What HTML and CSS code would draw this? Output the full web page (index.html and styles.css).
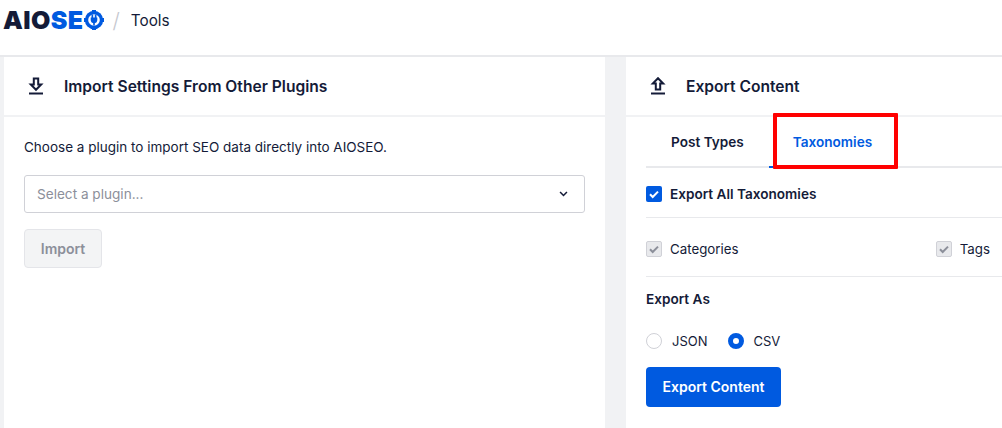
FILE: index.html
```html
<!DOCTYPE html>
<html lang="en">
<head>
  <meta charset="UTF-8">
  <title>Tools</title>
  <link rel="stylesheet" href="styles.css">
</head>
<body>
  <header class="topbar">
    <div class="logo">
      <span class="logo-dark">AIO</span><span class="logo-blue">SE</span>
      <svg class="logo-gear" viewBox="0 0 20 20" width="20" height="20">
        <circle cx="10" cy="10" r="9.200" fill="#005ae0"/>
        <path d="M8 0h4v3H8zM8 17h4v3H8zM0 8h3v4H0zM17 8h3v4h-3z" fill="#005ae0"/>
        <circle cx="10" cy="10" r="5.800" fill="#fff"/>
        <path d="M7.500 4.500h1.700v3h1.600v-3h1.700v3h.8v2.800a3.200 3.200 0 0 1-2.500 3V15.500H9.200v-2.200a3.200 3.200 0 0 1-2.500-3V7.500h.8z" fill="#005ae0"/>
      </svg>
    </div>
    <span class="crumb-sep">/</span>
    <span class="crumb">Tools</span>
  </header>

  <main class="columns">
    <section class="card card-import">
      <div class="card-head">
        <svg class="head-icon" viewBox="0 0 16 18" width="16" height="18">
          <path d="M5.800 1.500h4.400v6h3L8 12.800 2.800 7.500h3z" fill="none" stroke="#141b38" stroke-width="2"/>
          <path d="M1 16.500h14" stroke="#141b38" stroke-width="2"/>
        </svg>
        <h2>Import Settings From Other Plugins</h2>
      </div>
      <div class="import-body">
        <p class="intro">Choose a plugin to import SEO data directly into AIOSEO.</p>
        <div class="select">
          <span>Select a plugin...</span>
          <svg viewBox="0 0 10 7" width="9" height="6">
            <path d="M1 1.200l4 4 4-4" fill="none" stroke="#141b38" stroke-width="1.800"/>
          </svg>
        </div>
        <button class="btn-disabled" type="button">Import</button>
      </div>
    </section>

    <section class="card card-export">
      <div class="card-head">
        <svg class="head-icon" viewBox="0 0 16 18" width="16" height="18">
          <path d="M5.800 12.500h4.400v-6h3L8 1.200 2.800 6.500h3z" fill="none" stroke="#141b38" stroke-width="2"/>
          <path d="M1 16.500h14" stroke="#141b38" stroke-width="2"/>
        </svg>
        <h2>Export Content</h2>
      </div>
      <div class="tabs">
        <span class="tab">Post Types</span>
        <span class="tab tab-active">Taxonomies</span>
        <span class="tab-mark"></span>
      </div>
      <div class="export-body">
        <label class="row row-all">
          <span class="check check-on">
            <svg viewBox="0 0 16 16" width="16" height="16"><path d="M4 8.300l2.700 2.700L12 5.600" fill="none" stroke="#fff" stroke-width="2"/></svg>
          </span>
          Export All Taxonomies
        </label>
        <div class="row row-types">
          <label class="type">
            <span class="check check-off">
              <svg viewBox="0 0 16 16" width="16" height="16"><path d="M4 8.300l2.700 2.700L12 5.600" fill="none" stroke="#8c8f9a" stroke-width="2"/></svg>
            </span>
            Categories
          </label>
          <label class="type">
            <span class="check check-off">
              <svg viewBox="0 0 16 16" width="16" height="16"><path d="M4 8.300l2.700 2.700L12 5.600" fill="none" stroke="#8c8f9a" stroke-width="2"/></svg>
            </span>
            Tags
          </label>
        </div>
        <div class="export-as">Export As</div>
        <div class="radios">
          <label class="radio"><span class="dot"></span>JSON</label>
          <label class="radio"><span class="dot dot-on"></span>CSV</label>
        </div>
        <button class="btn-primary" type="button">Export Content</button>
      </div>
    </section>
  </main>
</body>
</html>
```

FILE: styles.css
```css
* {
  box-sizing: border-box;
}

html,
body {
  height: 100%;
}

body {
  margin: 0;
  background: #f1f2f4;
  color: #141b38;
  font-family: Inter, "Liberation Sans", sans-serif;
  font-size: 14px;
  overflow: hidden;
}

.topbar {
  display: flex;
  align-items: center;
  height: 57px;
  padding: 0 0 15px 3px;
  background: #fff;
  border-bottom: 2px solid #e8e9ec;
}

.logo {
  display: flex;
  align-items: center;
  font-family: Inter, sans-serif;
  font-size: 25px;
  font-weight: 900;
  letter-spacing: 0.4px;
}

.logo-dark {
  color: #141b38;
}

.logo-blue {
  color: #005ae0;
}

.crumb-sep {
  margin-left: 9px;
  color: #c6c8cf;
  font-size: 21px;
  font-weight: 300;
}

.crumb {
  margin-left: 11px;
  font-size: 15.300px;
}

.columns {
  display: flex;
  height: 371px;
  padding-left: 4px;
}

.card {
  background: #fff;
}

.card-import {
  width: 601px;
  margin-right: 21px;
}

.card-export {
  flex: 1;
}

.card-head {
  display: flex;
  align-items: center;
  height: 60px;
  padding-left: 24px;
  border-bottom: 2px solid #f1f2f4;
}

.head-icon {
  flex: none;
}

h2 {
  margin: 0 0 0 20px;
  font-size: 15.600px;
  font-weight: 600;
}

.import-body {
  padding: 20px 20px 0;
}

.intro {
  margin: 0;
  font-size: 13.500px;
  line-height: 20px;
}

.select {
  display: flex;
  align-items: center;
  justify-content: space-between;
  height: 38px;
  margin-top: 18px;
  padding: 0 16px 0 12px;
  border: 1px solid #d0d1d7;
  border-radius: 3px;
  color: #8c8f9a;
  font-size: 13.600px;
}

.btn-disabled {
  display: block;
  width: 78px;
  height: 39px;
  margin-top: 16px;
  border: 1px solid #e4e5e9;
  border-radius: 4px;
  background: #f3f4f5;
  color: #8c8f9a;
  font: 600 14px Inter, sans-serif;
}

.tabs {
  position: relative;
  display: flex;
  height: 51px;
  margin-left: 20px;
  border-bottom: 2px solid #e8e9ec;
  font-size: 13.600px;
  font-weight: 600;
}

.tab {
  padding-top: 17px;
  margin-left: 25px;
}

.tab-active {
  height: 51px;
  padding: 17px 24px 0;
  border-bottom: 2px solid #005ae0;
  color: #005ae0;
}

.tab-mark {
  position: absolute;
  left: 127px;
  top: -4px;
  width: 125px;
  height: 56px;
  border: 4px solid #f00;
  border-radius: 1px;
}

.export-body {
  padding: 0 0 0 20px;
}

.row {
  display: flex;
  align-items: center;
  border-bottom: 1px solid #e8e9ec;
}

.row-all {
  height: 50px;
  padding-top: 3px;
  gap: 8px;
  font-size: 13.600px;
  font-weight: 600;
}

.row-types {
  justify-content: space-between;
  height: 59px;
  padding: 4px 12px 0 0;
  font-size: 13.300px;
}

.type {
  display: flex;
  align-items: center;
  gap: 8px;
}

.check {
  display: block;
  width: 16px;
  height: 16px;
  border-radius: 2px;
}

.check svg {
  display: block;
}

.check-on {
  background: #005ae0;
}

.check-off {
  background: #e8e9ec;
  border: 1px solid #d0d1d7;
}

.check-off svg {
  margin: -1px;
}

.export-as {
  margin-top: 14px;
  font-size: 13.600px;
  font-weight: 600;
  line-height: 16px;
}

.radios {
  display: flex;
  gap: 20px;
  margin-top: 26px;
  font-size: 13px;
}

.radio {
  display: flex;
  align-items: center;
  gap: 10px;
  line-height: 16px;
}

.dot {
  display: block;
  width: 16px;
  height: 16px;
  border: 1px solid #d0d1d7;
  border-radius: 50%;
}

.dot-on {
  border: 5px solid #005ae0;
}

.btn-primary {
  display: block;
  width: 135px;
  height: 40px;
  margin-top: 18px;
  padding-bottom: 2px;
  border: 0;
  border-radius: 4px;
  background: #005ae0;
  color: #fff;
  font: 600 14px Inter, sans-serif;
}
```
